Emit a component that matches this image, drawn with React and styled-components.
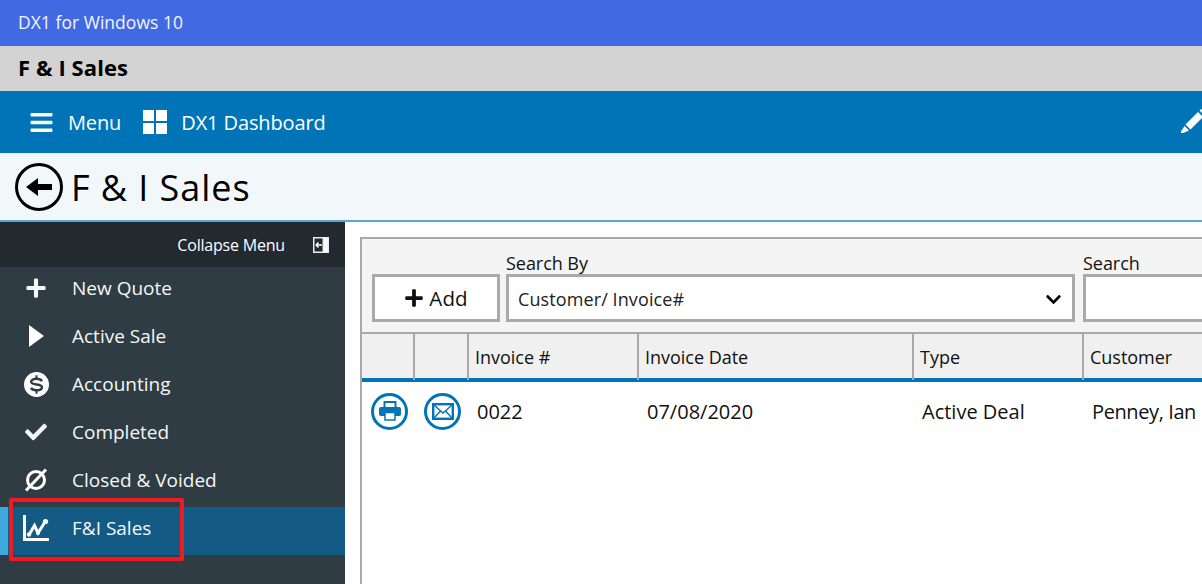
import React from "react";
import styled, { createGlobalStyle } from "styled-components";
import { FaPlus, FaCheck, FaBars, FaChevronDown } from "react-icons/fa";

const Global = createGlobalStyle`
  html, body { margin: 0; padding: 0; background: #fff; overflow: hidden; }
  body { font-family: "Open Sans", "Noto Sans", sans-serif; }
`;
const Page = styled.div`width:1202px;height:584px;display:flex;flex-direction:column;overflow:hidden;position:relative;`;
const TitleBar = styled.div`height:46px;flex:none;background:#4169e1;color:#f2f5ff;font-size:17.5px;line-height:45px;padding-left:18px;letter-spacing:.03px;`;
const AppName = styled.div`height:45px;flex:none;background:#d3d3d3;color:#000;font-size:22px;font-weight:700;line-height:43px;padding-left:18px;letter-spacing:.1px;`;
const Nav = styled.div`height:62px;flex:none;background:#0174b8;color:#fff;display:flex;align-items:center;padding-left:29px;font-size:20px;letter-spacing:-.12px;position:relative;`;
const NavItem = styled.div`display:flex;align-items:center;gap:${p=>p.$gap}px;margin-right:${p=>p.$mr||0}px;line-height:1;`;
const NavLabel = styled.span`padding-top:2px;`;
const EditSlot = styled.span`position:absolute;left:1181px;top:18px;display:flex;`;
const Header = styled.div`height:67px;flex:none;background:#f2f7fa;border-bottom:2px solid #5aa6d8;display:flex;align-items:center;padding-left:15px;gap:8px;`;
const Back = styled.div`width:48px;height:48px;box-sizing:border-box;border:3px solid #000;border-radius:50%;display:flex;align-items:center;justify-content:center;`;
const PageTitle = styled.h1`margin:2px 0 0;font-size:36px;font-weight:400;color:#000;letter-spacing:.95px;line-height:1;`;
const Body = styled.div`flex:1;display:flex;min-height:0;`;
const Side = styled.aside`width:345px;flex:none;background:#2f3c43;display:flex;flex-direction:column;`;
const Collapse = styled.div`height:45px;flex:none;background:#22292f;color:#fff;display:flex;align-items:center;justify-content:flex-end;padding-right:16px;gap:28px;font-size:16px;letter-spacing:-.2px;box-sizing:border-box;`;
const MenuItem = styled.div`height:48px;flex:none;display:flex;align-items:center;color:#f4f7f8;font-size:19px;letter-spacing:0;padding-bottom:6px;background:${p=>p.$active?"#135a85":"transparent"};border-left:8px solid ${p=>p.$active?"#3fa9dd":"transparent"};box-sizing:border-box;`;
const MenuIcon = styled.span`width:56px;margin-right:8px;display:flex;justify-content:center;align-items:center;flex:none;`;
const RedBox = styled.div`position:absolute;left:9px;top:498px;width:175px;height:63px;box-sizing:border-box;border:4px solid #ed1c24;border-radius:2px;`;
const Main = styled.main`flex:1;min-width:0;background:#fff;padding:15px 0 0 15px;overflow:hidden;`;
const Panel = styled.div`height:100%;border:2px solid #a9a9a9;border-right:none;border-bottom:none;background:#fff;width:900px;`;
const Toolbar = styled.div`height:93px;background:#f4f4f4;box-sizing:border-box;padding:0 0 10px 10px;display:flex;align-items:flex-end;gap:6px;`;
const Field = styled.div`display:flex;flex-direction:column;margin-right:${p=>p.$mr||0}px;`;
const Label = styled.label`font-size:18px;line-height:21px;color:#111;letter-spacing:-.05px;`;
const Box = styled.div`box-sizing:border-box;height:48px;width:${p=>p.$w}px;border:3px solid #a9a9a9;background:#fff;display:flex;align-items:center;font-size:18px;color:#222;letter-spacing:.1px;`;
const AddBtn = styled(Box)`justify-content:center;gap:5px;font-size:20.5px;color:#111;`;
const SelectBox = styled(Box)`justify-content:space-between;padding:2px 10px 0 9px;`;
const TableHead = styled.div`display:grid;grid-template-columns:53px 54px 170px 275px 170px 200px;height:46px;background:#f0f0f0;border-top:2px solid #a9a9a9;box-sizing:border-box;`;
const Th = styled.div`border-right:2px solid #a9a9a9;font-size:18px;color:#111;padding-left:6px;line-height:46px;letter-spacing:-.02px;`;
const BlueLine = styled.div`height:4px;background:#0174b8;`;
const Row = styled.div`display:grid;grid-template-columns:53px 54px 170px 275px 170px 200px;height:58px;align-items:center;font-size:20px;color:#111;`;
const Td = styled.div`padding-left:8px;white-space:nowrap;letter-spacing:${p=>p.$ls||0}px;`;
const RoundIcon = styled.div`width:37px;height:37px;box-sizing:border-box;border:3px solid #0174b8;border-radius:50%;display:flex;align-items:center;justify-content:center;margin-left:${p=>p.$ml}px;`;

const Windows = () => (
  <svg width="24" height="24" viewBox="0 0 24 24" fill="#fff"><rect x="0" y="0" width="11" height="11"/><rect x="13" y="0" width="11" height="11"/><rect x="0" y="13" width="11" height="11"/><rect x="13" y="13" width="11" height="11"/></svg>
);
const Pencil = () => (
  <svg width="25" height="25" viewBox="0 0 25 25" fill="#fff"><path d="M4.5 15.5L17 3L22 8L9.5 20.5Z"/><path d="M18.5 1.5L20 0L25 5L23.5 6.5Z"/><path d="M3.5 17L8 21.5L2.5 24H0V22.5Z"/></svg>
);
const BackArrow = () => (
  <svg width="26" height="20" viewBox="0 0 26 20" fill="#000"><path d="M0 10L12 1V7H26V13H12V19Z"/></svg>
);
const CollapseIcon = () => (
  <svg width="16" height="16" viewBox="0 0 16 16"><rect width="16" height="16" fill="#e8ecee"/><rect x="1.5" y="1.5" width="8" height="13" fill="#22292f"/><rect x="11" y="1.5" width="3.5" height="13" fill="#fff"/><path d="M3 8h6M3 8l2.5-2.5M3 8l2.5 2.5" stroke="#fff" strokeWidth="1.6" fill="none"/></svg>
);
const Play = () => (
  <svg width="15" height="22" viewBox="0 0 15 22" fill="#fff"><path d="M0 0L15 11L0 22Z"/></svg>
);
const Dollar = () => (
  <svg width="25" height="25" viewBox="0 0 25 25"><circle cx="12.5" cy="12.5" r="12.5" fill="#fff"/><path d="M18 9.2c-.8-1.6-3-2.4-5.5-2.4-3 0-5.4 1.1-5.4 3 0 3.9 10.9 1.4 10.9 5.4 0 1.9-2.4 3-5.5 3-2.6 0-4.7-.8-5.5-2.5" fill="none" stroke="#2f3c43" strokeWidth="2.4"/><path d="M12.5 3.2v3.6M12.5 18.2v3.6" stroke="#2f3c43" strokeWidth="2"/></svg>
);
const Ban = () => (
  <svg width="24" height="24" viewBox="0 0 24 24" fill="none" stroke="#fff" strokeWidth="3"><circle cx="12" cy="12" r="8.5"/><path d="M2 22.5L22 1.5"/></svg>
);
const Chart = () => (
  <svg width="26" height="26" viewBox="0 0 26 26" fill="none" stroke="#fff"><path d="M1.5 0V24.5H26" strokeWidth="3"/><path d="M6.5 19L11.5 10.5L15 18L22 7" strokeWidth="3"/><circle cx="6" cy="19.5" r="2.2" fill="#fff" stroke="none"/><circle cx="15" cy="18" r="2" fill="#fff" stroke="none"/><circle cx="22.5" cy="6.5" r="2.6" fill="#fff" stroke="none"/></svg>
);
const Printer = () => (
  <svg width="22" height="20" viewBox="0 0 22 20"><rect x="5.5" y="1" width="11" height="6" fill="#fff" stroke="#0174b8" strokeWidth="2"/><rect x="0" y="6" width="22" height="9" rx="2" fill="#0174b8"/><rect x="6" y="11.5" width="10" height="7.5" fill="#fff" stroke="#0174b8" strokeWidth="1.5"/></svg>
);
const Mail = () => (
  <svg width="22" height="17" viewBox="0 0 22 17" fill="none" stroke="#0174b8"><rect x="1.2" y="1.2" width="19.6" height="14.6" strokeWidth="2.4"/><path d="M2 2l9 8 9-8M2 15l6.5-7M20 15l-6.5-7" strokeWidth="1.4"/></svg>
);

const items = [
  ["New Quote", <FaPlus size={22}/>],
  ["Active Sale", <Play/>],
  ["Accounting", <Dollar/>],
  ["Completed", <FaCheck size={22}/>],
  ["Closed & Voided", <Ban/>],
  ["F&I Sales", <Chart/>, true],
];

export default function App() {
  return (
    <Page>
      <Global/>
      <TitleBar>DX1 for Windows 10</TitleBar>
      <AppName>F &amp; I Sales</AppName>
      <Nav>
        <NavItem $gap={14} $mr={22}><FaBars size={25}/><NavLabel>Menu</NavLabel></NavItem>
        <NavItem $gap={14}><Windows/><NavLabel>DX1 Dashboard</NavLabel></NavItem>
        <EditSlot><Pencil/></EditSlot>
      </Nav>
      <Header>
        <Back><BackArrow/></Back>
        <PageTitle>F &amp; I Sales</PageTitle>
      </Header>
      <Body>
        <Side>
          <Collapse>Collapse Menu <CollapseIcon/></Collapse>
          {items.map(([t, ic, a]) => (
            <MenuItem key={t} $active={a}>
              <MenuIcon>{ic}</MenuIcon>{t}
            </MenuItem>
          ))}
        </Side>
        <Main>
          <Panel>
            <Toolbar>
              <AddBtn $w={128}><FaPlus size={20}/>Add</AddBtn>
              <Field $mr={2}><Label>Search By</Label>
                <SelectBox $w={569}>Customer/ Invoice#<FaChevronDown size={17} color="#000"/></SelectBox>
              </Field>
              <Field><Label>Search</Label><Box $w={130}/></Field>
            </Toolbar>
            <TableHead>
              <Th/><Th/><Th>Invoice #</Th><Th>Invoice Date</Th><Th>Type</Th><Th>Customer</Th>
            </TableHead>
            <BlueLine/>
            <Row>
              <RoundIcon $ml={9}><Printer/></RoundIcon>
              <RoundIcon $ml={9}><Mail/></RoundIcon>
              <Td>0022</Td><Td>07/08/2020</Td><Td>Active Deal</Td><Td $ls={-0.4}>Penney, Ian</Td>
            </Row>
          </Panel>
        </Main>
      </Body>
      <RedBox/>
    </Page>
  );
}
